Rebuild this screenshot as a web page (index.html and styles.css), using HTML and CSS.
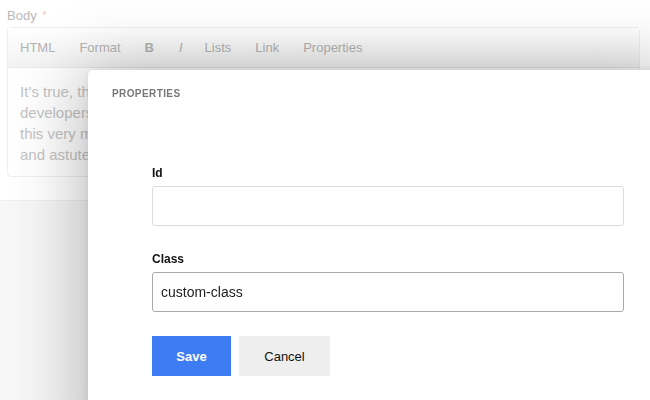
FILE: index.html
```html
<!DOCTYPE html>
<html>
<head>
<meta charset="utf-8">
<link rel="stylesheet" href="styles.css">
</head>
<body>
<div class="page">
  <div class="field-label">Body <span class="req">*</span></div>
  <div class="editor">
    <div class="toolbar">
      <span class="tool">HTML</span>
      <span class="tool">Format</span>
      <span class="tool bold">B</span>
      <span class="tool ital">I</span>
      <span class="tool">Lists</span>
      <span class="tool">Link</span>
      <span class="tool">Properties</span>
    </div>
    <div class="content">
      <p class="line">It’s true, the editor was made for writers, designers and</p>
      <p class="line">developers who care about clean, semantic markup. Writing in</p>
      <p class="line">this very moment is easy for seasoned, curious, creative</p>
      <p class="line">and astute authors alike.</p>
    </div>
  </div>
</div>
<div class="footer-band"></div>

<div class="modal">
  <div class="modal-title">PROPERTIES</div>
  <form class="modal-form">
    <label class="lbl">Id</label>
    <input class="inp" type="text" value="">
    <label class="lbl">Class</label>
    <input class="inp focus" type="text" value="custom-class">
    <div class="actions">
      <button type="button" class="btn save">Save</button>
      <button type="button" class="btn cancel">Cancel</button>
    </div>
  </form>
</div>
</body>
</html>
```
FILE: styles.css
```css
html, body {
  margin: 0;
  padding: 0;
  height: 100%;
  overflow: hidden;
  background: #fff;
  font-family: "Liberation Sans", Arial, sans-serif;
}
.page {
  padding: 7px 10px 0 7px;
  height: 193px;
  background: #fff;
}
.field-label {
  font-size: 13px;
  color: #b9b9b9;
  line-height: 16px;
  height: 20px;
}
.req {
  color: #f4c4c4;
  font-size: 11px;
  margin-left: 2px;
  vertical-align: 1px;
}
.editor {
  border: 1px solid #efefef;
  border-radius: 4px;
  background: #fff;
}
.toolbar {
  height: 39px;
  border-bottom: 1px solid #e8e8e8;
  background: linear-gradient(#ffffff, #f3f3f3);
  display: flex;
  align-items: center;
  padding-left: 12px;
  font-size: 13px;
  color: #b3b3b3;
}
.tool { margin-right: 24px; }
.tool.bold { font-weight: bold; margin-right: 25px; }
.tool.ital { font-style: italic; margin-right: 22px; }
.content {
  padding: 13px 12px 9px 12px;
  font-size: 15px;
  line-height: 21px;
  color: #c4c4c4;
  height: 86px;
  overflow: hidden;
}
.line {
  margin: 0;
  white-space: nowrap;
}
.footer-band {
  height: 206px;
  background: #f7f7f7;
  border-top: 1px solid #eeeeee;
}
.modal {
  position: fixed;
  left: 88px;
  top: 70px;
  width: 600px;
  height: 400px;
  background: #fff;
  border-top-left-radius: 5px;
  box-shadow: -6px 0 70px rgba(0, 0, 0, 0.28), 0 0 8px rgba(0, 0, 0, 0.08);
}
.modal-title {
  padding: 18px 24px 0;
  font-size: 10px;
  font-weight: bold;
  letter-spacing: 0.4px;
  color: #777;
  line-height: 12px;
}
.modal-form {
  margin: 66px 0 0 64px;
  width: 472px;
  display: flex;
  flex-direction: column;
}
.lbl {
  font-size: 12px;
  font-weight: bold;
  color: #111;
  line-height: 14px;
  margin-bottom: 6px;
}
.inp {
  box-sizing: border-box;
  height: 40px;
  border: 1px solid #dcdcdc;
  border-radius: 3px;
  padding: 0 8px;
  font-family: "Liberation Sans", Arial, sans-serif;
  font-size: 14px;
  color: #222;
  margin: 0 0 26px;
  outline: none;
}
.inp.focus { border-color: #a9a9a9; margin-bottom: 24px; }
.actions {
  display: flex;
  gap: 8px;
}
.btn {
  height: 40px;
  border: 0;
  border-radius: 0;
  font-family: "Liberation Sans", Arial, sans-serif;
  font-size: 13px;
  padding: 0;
}
.save {
  width: 79px;
  background: #3e7cf3;
  color: #fff;
  font-weight: bold;
}
.cancel {
  width: 91px;
  background: #eeeeee;
  color: #111;
}
```
